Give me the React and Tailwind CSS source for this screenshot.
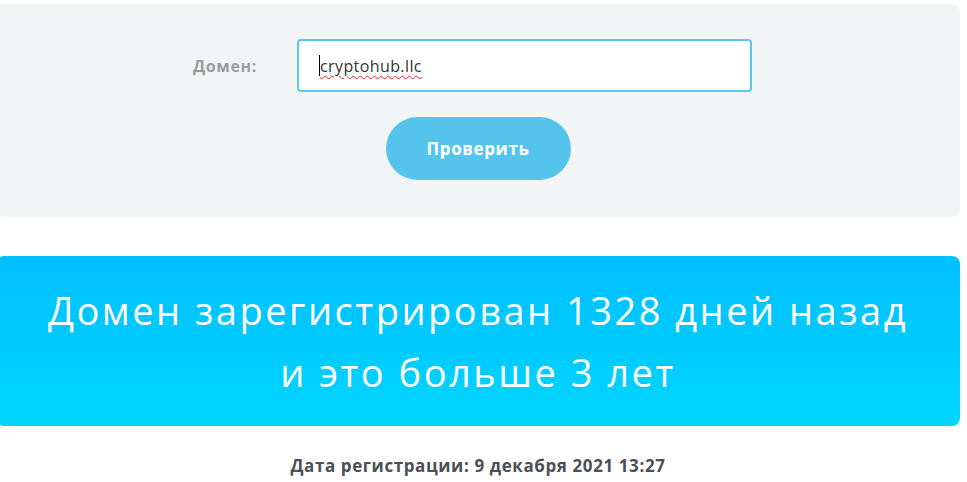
export default function App() {
  const font = { fontFamily: '"Open Sans", "Noto Sans", sans-serif' };
  return (
    <div className="w-[967px] h-[482px] bg-white overflow-hidden" style={font}>
      <div className="w-[964px] -ml-[4px] pt-[4px]">
        <section className="bg-[#f2f5f6] rounded-lg h-[213px] pt-[35px] flex flex-col">
          <div className="flex items-center pl-[197px]">
            <label className="w-[104px] text-[16px] font-bold tracking-[0.6px] text-[#999c9e]">Домен:</label>
            <div className="w-[455px] h-[53px] bg-white border-2 border-[#5bc5ea] rounded-[4px] flex items-center pl-[21px]">
              <span className="relative text-[16px] tracking-[0.4px] text-[#333] underline decoration-wavy decoration-[#e02020] decoration-1 underline-offset-[3px]">
                <span className="absolute -left-[1px] top-[1px] w-[1px] h-[21px] bg-black"></span>
                cryptohub.llc
              </span>
            </div>
          </div>
          <button className="mx-auto mt-[25px] w-[185px] h-[63px] rounded-full bg-[#55c4ec] text-white text-[17px] tracking-[0.6px] font-bold">
            Проверить
          </button>
        </section>
        <section className="mt-[39px] h-[170px] rounded-lg bg-gradient-to-b from-[#00bfff] to-[#00d5ff] flex items-center justify-center">
          <h1 className="text-center text-white font-normal text-[38px] tracking-[2.5px] leading-[62px]">
            Домен зарегистрирован 1328 дней назад
            <br />
            и это больше 3 лет
          </h1>
        </section>
        <p className="mt-[28px] text-center text-[17px] tracking-[0.6px] font-bold text-[#4b5056] leading-[24px]">
          Дата регистрации: 9 декабря 2021 13:27
        </p>
      </div>
    </div>
  );
}
